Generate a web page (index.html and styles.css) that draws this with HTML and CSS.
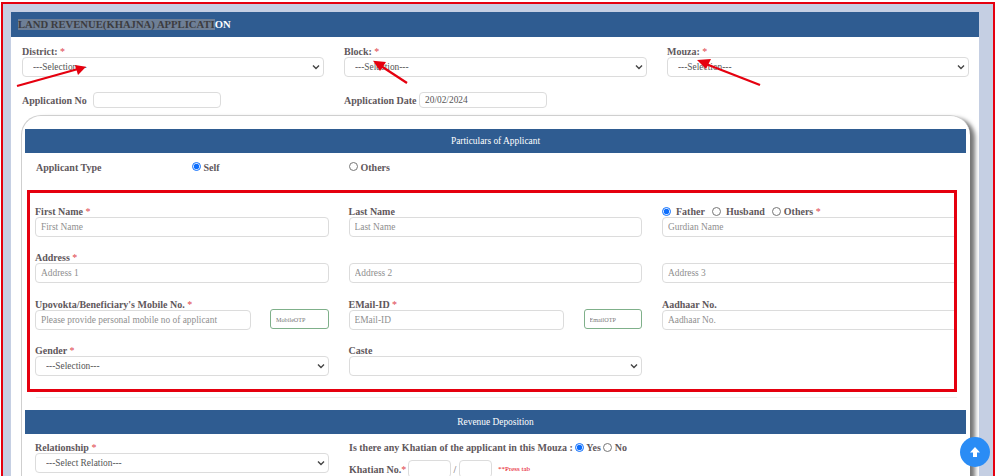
FILE: index.html
```html
<!DOCTYPE html>
<html lang="en">
<head>
<meta charset="utf-8">
<title>Land Revenue (Khajna) Application</title>
<link rel="stylesheet" href="styles.css">
</head>
<body>
<div class="frame">
  <main class="panel">
    <h1 class="title"><span class="selected">LAND REVENUE(KHAJNA) APPLICATI</span>ON</h1>
    <div class="top-grid">
      <div class="field"><label>District: <b class="req">*</b></label><select class="ctl"><option>---Selection---</option></select></div>
      <div class="field"><label>Block: <b class="req">*</b></label><select class="ctl"><option>---Selection---</option></select></div>
      <div class="field"><label>Mouza: <b class="req">*</b></label><select class="ctl"><option>---Selection---</option></select></div>
    </div>
    <div class="app-row">
      <div class="app-item"><label class="app-label-no">Application No</label><input class="ctl app-no" type="text"></div>
      <div class="app-item"><label class="app-label-date">Application Date</label><input class="ctl app-date" type="text" value="20/02/2024"></div>
    </div>
    <section class="card">
      <h2 class="bar">Particulars of Applicant</h2>
      <div class="type-row">
        <span class="lbl">Applicant Type</span>
        <span class="lbl"><input type="radio" name="t" class="radio" checked> Self</span>
        <span class="lbl"><input type="radio" name="t" class="radio"> Others</span>
      </div>
      <div class="red-box">
        <div class="form-grid">
          <div class="field"><label>First Name <b class="req">*</b></label><input class="ctl" placeholder="First Name"></div>
          <div class="field"><label>Last Name</label><input class="ctl" placeholder="Last Name"></div>
          <div class="field"><label class="guardian"><input type="radio" name="g" class="radio" checked><span class="g1">Father</span><input type="radio" name="g" class="radio"><span class="g2">Husband</span><input type="radio" name="g" class="radio"><span class="g3">Others <b class="req">*</b></span></label><input class="ctl wide" placeholder="Gurdian Name"></div>

          <div class="field"><label>Address <b class="req">*</b></label><input class="ctl" placeholder="Address 1"></div>
          <div class="field"><label>&nbsp;</label><input class="ctl" placeholder="Address 2"></div>
          <div class="field"><label>&nbsp;</label><input class="ctl wide" placeholder="Address 3"></div>

          <div class="field"><label>Upovokta/Beneficiary's Mobile No. <b class="req">*</b></label>
            <div class="otp-row"><input class="ctl" placeholder="Please provide personal mobile no of applicant"><input class="otp" placeholder="MobileOTP"></div></div>
          <div class="field"><label>EMail-ID <b class="req">*</b></label>
            <div class="otp-row"><input class="ctl" placeholder="EMail-ID"><input class="otp" placeholder="EmailOTP"></div></div>
          <div class="field"><label>Aadhaar No.</label><input class="ctl wide" placeholder="Aadhaar No."></div>

          <div class="field"><label>Gender <b class="req">*</b></label><select class="ctl"><option>---Selection---</option></select></div>
          <div class="field"><label>Caste</label><select class="ctl"><option></option></select></div>
        </div>
      </div>
      <hr class="rule">
      <h2 class="bar">Revenue Deposition</h2>
      <div class="rev-grid">
        <div class="field"><label>Relationship <b class="req">*</b></label><select class="ctl"><option>---Select Relation---</option></select></div>
        <div class="khatian">
          <div class="q">Is there any Khatian of the applicant in this Mouza : <input type="radio" name="k" class="radio" checked> Yes <input type="radio" name="k" class="radio"> No</div>
          <div class="k-row"><span class="k-label">Khatian No.<b class="req">*</b></span><input class="ctl k1"><span class="slash">/</span><input class="ctl k2"><span class="press">**Press tab</span></div>
        </div>
      </div>
    </section>
  </main>
</div>

<svg class="arrows" width="1000" height="476" viewBox="0 0 1000 476" aria-hidden="true">
  <g class="arrow-line">
    <line x1="17" y1="86" x2="78" y2="69"/>
    <line x1="407" y1="83" x2="381" y2="66"/>
    <line x1="760" y1="85" x2="706" y2="64"/>
  </g>
  <g class="arrow-head">
    <polygon points="86,66.7 75,65 78,75"/>
    <polygon points="373,60.7 386,62 380,71"/>
    <polygon points="697,60 711,59 706,69"/>
  </g>
</svg>

<button class="to-top" type="button" aria-label="Scroll to top">
  <svg width="12" height="12" viewBox="0 0 12 12"><path d="M6 1 L11 6.4 H8 V11 H4 V6.4 H1 Z" fill="#fff"/></svg>
</button>
</body>
</html>
```
FILE: styles.css
```css
* { box-sizing: border-box; }
html, body { margin: 0; padding: 0; height: 476px; overflow: hidden; background: #fff; }
body { font-family: "Liberation Serif", "Times New Roman", serif; color: #5f585c; }

.frame {
  width: 994px;
  height: 474px;
  margin: 2px 0 0 1px;
  padding: 8px 14px 0 8px;
  border: 2px solid #e5000f;
  border-bottom: 0;
  background: #c5cfe3;
  overflow: hidden;
}
.panel { background: #fff; height: 480px; padding: 0; }

.title {
  margin: 0;
  height: 25px;
  padding: 0 0 0 7px;
  background: #2f5c91;
  color: #fff;
  font-size: 10.65px;
  font-weight: 700;
  line-height: 25px;
}
.selected { background: #6e7f96; color: #3c3c40; }

.top-grid {
  display: grid;
  grid-template-columns: 302px 303px 302px;
  column-gap: 20px;
  padding: 8px 0 0 11px;
}
.field { display: flex; flex-direction: column; min-width: 0; }
.field > label {
  display: block;
  height: 12px;
  font-size: 10px;
  font-weight: 700;
  line-height: 14px;
  white-space: nowrap;
}
.req { color: #e0474f; font-weight: 400; }

.ctl {
  display: block;
  width: 100%;
  height: 20px;
  padding: 0 10px;
  border: 1px solid #dcdcdc;
  border-radius: 4px;
  background-color: #fff;
  color: #555;
  font-family: inherit;
  font-size: 9.4px;
}
.ctl::placeholder { color: #8f8f8f; opacity: 1; }
input.ctl { padding: 0 5px; }
select.ctl {
  appearance: none;
  padding: 0 20px 0 10px;
  background-image: url("data:image/svg+xml,%3Csvg xmlns='http://www.w3.org/2000/svg' width='8' height='6' viewBox='0 0 8 6'%3E%3Cpath d='M1 1.5 L4 4.5 L7 1.5' fill='none' stroke='%23444' stroke-width='1.4'/%3E%3C/svg%3E");
  background-repeat: no-repeat;
  background-position: calc(100% - 3px) center;
}

.app-row {
  display: grid;
  grid-template-columns: 302px 303px 302px;
  column-gap: 20px;
  padding: 15px 0 0 11px;
  height: 31px;
}
.app-item { display: flex; align-items: center; height: 16px; font-size: 10px; font-weight: 700; white-space: nowrap; }
.app-label-no { flex: none; width: 71px; }
.app-label-date { flex: none; width: 75px; }
.app-no, .app-date { flex: none; height: 16px; width: 128px; }

.card {
  margin: 7px 0 0 10px;
  width: 949px;
  height: 380px;
  padding: 13px 0 0 3px;
  border: 1px solid #cfcfcf;
  border-right: 0;
  border-bottom: 0;
  border-radius: 20px 20px 0 0;
  background: #fff;
  box-shadow: 5px 3px 4px #777;
}
.bar {
  margin: 0;
  height: 24px;
  width: 941px;
  background: #2f5c91;
  color: #fff;
  font-size: 9.4px;
  font-weight: 400;
  line-height: 24px;
  text-align: center;
}
.type-row {
  display: grid;
  grid-template-columns: 156px 157px 1fr;
  align-items: center;
  height: 28px;
  padding-left: 11px;
}
.lbl { font-size: 10px; font-weight: 700; }
.radio { width: 9px; height: 9px; margin: 0; accent-color: #0d6efd; vertical-align: -0.5px; }

.red-box {
  width: 930px;
  height: 202px;
  margin: 9px 0 0 2px;
  padding: 12px 0 0 5px;
  border: 3px solid #e5000f;
  overflow: hidden;
}
.form-grid {
  display: grid;
  grid-template-columns: 293.5px 293.5px 293.5px;
  grid-template-rows: 32px 33px 32px 32px;
  column-gap: 20px;
  row-gap: 14px;
}
.wide { width: 300px; }
.otp-row { display: flex; justify-content: space-between; align-items: flex-start; }
.otp-row .ctl { width: 215.5px; }
.otp {
  width: 58.5px;
  height: 20px;
  margin-top: -1px;
  padding: 0 5px;
  border: 1px solid #7fb08a;
  border-radius: 3px;
  background: #fff;
  font-family: inherit;
  font-size: 6.2px;
}
.otp::placeholder { color: #777; opacity: 1; }

.guardian { display: flex; align-items: center; }
.g1 { margin: 0 7px 0 5px; }
.g2 { margin: 0 7px 0 5px; }
.g3 { margin-left: 3px; }

.rule { width: 921px; margin: 5px 0 12px 11px; border: 0; border-top: 1px solid #efefef; }

.rev-grid {
  display: grid;
  grid-template-columns: 293.5px 1fr;
  column-gap: 20.5px;
  padding: 7px 0 0 10px;
}
.q { height: 18px; margin-top: 1px; font-size: 10px; font-weight: 700; line-height: 12px; white-space: nowrap; }
.k-row { display: flex; align-items: center; font-size: 10px; font-weight: 700; }
.k-label { width: 59px; white-space: nowrap; }
.k1 { width: 43px; height: 18px; }
.slash { width: 8px; text-align: center; font-weight: 400; }
.k2 { width: 33px; height: 18px; }
.press { margin-left: 6px; color: #e5000f; font-size: 7px; font-weight: 400; }

.arrows { position: absolute; left: 0; top: 0; pointer-events: none; }
.arrow-line line { stroke: #e5000f; stroke-width: 2.3; }
.arrow-head polygon { fill: #e5000f; }

.to-top {
  position: fixed;
  left: 960px;
  top: 437px;
  display: flex;
  align-items: center;
  justify-content: center;
  width: 30px;
  height: 30px;
  padding: 0;
  border: 0;
  border-radius: 50%;
  background: #2a8cf5;
}
```
